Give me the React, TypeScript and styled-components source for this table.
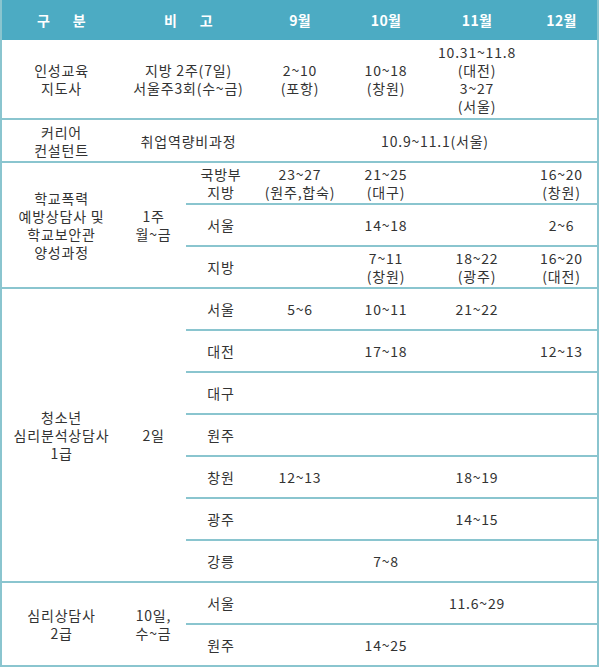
import React from 'react';
import styled, { createGlobalStyle } from 'styled-components';

const GlobalStyle = createGlobalStyle`
  html, body {
    margin: 0;
    padding: 0;
    background: #ffffff;
  }
  body {
    font-family: 'Noto Sans CJK KR', 'Noto Sans', sans-serif;
  }
`;

const LINE = '#8ac5cf';

const Table = styled.table`
  width: 599px;
  border-collapse: collapse;
  table-layout: fixed;
  border-left: 2px solid ${LINE};
  border-right: 2px solid ${LINE};
  color: #333333;
  font-size: 14px;
  line-height: 18px;
  letter-spacing: 0.8px;
`;

const HeadRow = styled.tr`
  height: 40px;
  background: #4cabc3;
`;

const Th = styled.th<{ $spaced?: boolean }>`
  padding: 0;
  color: #ffffff;
  font-weight: 700;
  font-size: 14px;
  letter-spacing: 0.3px;
  text-align: center;
  word-spacing: ${(p) => (p.$spaced ? '19px' : 'normal')};
`;

const Row = styled.tr<{ $h: number }>`
  height: ${(p) => p.$h}px;
`;

const Td = styled.td`
  padding: 0;
  text-align: center;
  vertical-align: middle;
  border-bottom: 2px solid ${LINE};
  white-space: nowrap;
`;

const Lines = ({ text }: { text: string }) => (
  <>
    {text.split('|').map((t, i) => (
      <div key={i}>{t}</div>
    ))}
  </>
);

type Sub = { place: string; cells: string[] };

const schoolRows: Sub[] = [
  { place: '국방부|지방', cells: ['23~27|(원주,합숙)', '21~25|(대구)', '', '16~20|(창원)'] },
  { place: '서울', cells: ['', '14~18', '', '2~6'] },
  { place: '지방', cells: ['', '7~11|(창원)', '18~22|(광주)', '16~20|(대전)'] },
];

const youthRows: Sub[] = [
  { place: '서울', cells: ['5~6', '10~11', '21~22', ''] },
  { place: '대전', cells: ['', '17~18', '', '12~13'] },
  { place: '대구', cells: ['', '', '', ''] },
  { place: '원주', cells: ['', '', '', ''] },
  { place: '창원', cells: ['12~13', '', '18~19', ''] },
  { place: '광주', cells: ['', '', '14~15', ''] },
  { place: '강릉', cells: ['', '7~8', '', ''] },
];

const counselRows: Sub[] = [
  { place: '서울', cells: ['', '', '11.6~29', ''] },
  { place: '원주', cells: ['', '14~25', '', ''] },
];

function Group({ title, note, rows, h }: { title: string; note: string; rows: Sub[]; h: number }) {
  return (
    <>
      {rows.map((r, i) => (
        <Row $h={h} key={i}>
          {i === 0 && (
            <>
              <Td rowSpan={rows.length}>
                <Lines text={title} />
              </Td>
              <Td rowSpan={rows.length}>
                <Lines text={note} />
              </Td>
            </>
          )}
          <Td>
            <Lines text={r.place} />
          </Td>
          {r.cells.map((c, j) => (
            <Td key={j}>
              <Lines text={c} />
            </Td>
          ))}
        </Row>
      ))}
    </>
  );
}

export default function App() {
  return (
    <>
      <GlobalStyle />
      <Table>
        <colgroup>
          <col style={{ width: 120 }} />
          <col style={{ width: 65 }} />
          <col style={{ width: 70 }} />
          <col style={{ width: 88 }} />
          <col style={{ width: 84 }} />
          <col style={{ width: 98 }} />
          <col style={{ width: 72 }} />
        </colgroup>
        <thead>
          <HeadRow>
            <Th $spaced>구 분</Th>
            <Th $spaced colSpan={2}>
              비 고
            </Th>
            <Th>9월</Th>
            <Th>10월</Th>
            <Th>11월</Th>
            <Th>12월</Th>
          </HeadRow>
        </thead>
        <tbody>
          <Row $h={79}>
            <Td>
              <Lines text="인성교육|지도사" />
            </Td>
            <Td colSpan={2}>
              <Lines text="지방 2주(7일)|서울주3회(수~금)" />
            </Td>
            <Td>
              <Lines text="2~10|(포항)" />
            </Td>
            <Td>
              <Lines text="10~18|(창원)" />
            </Td>
            <Td>
              <Lines text="10.31~11.8|(대전)|3~27|(서울)" />
            </Td>
            <Td />
          </Row>
          <Row $h={43}>
            <Td>
              <Lines text="커리어|컨설턴트" />
            </Td>
            <Td colSpan={2}>취업역량비과정</Td>
            <Td />
            <Td colSpan={2}>10.9~11.1(서울)</Td>
            <Td />
          </Row>
          <Group title="학교폭력|예방상담사 및|학교보안관|양성과정" note="1주|월~금" rows={schoolRows} h={42} />
          <Group title="청소년|심리분석상담사|1급" note="2일" rows={youthRows} h={42} />
          <Group title="심리상담사|2급" note="10일,|수~금" rows={counselRows} h={42} />
        </tbody>
      </Table>
    </>
  );
}
